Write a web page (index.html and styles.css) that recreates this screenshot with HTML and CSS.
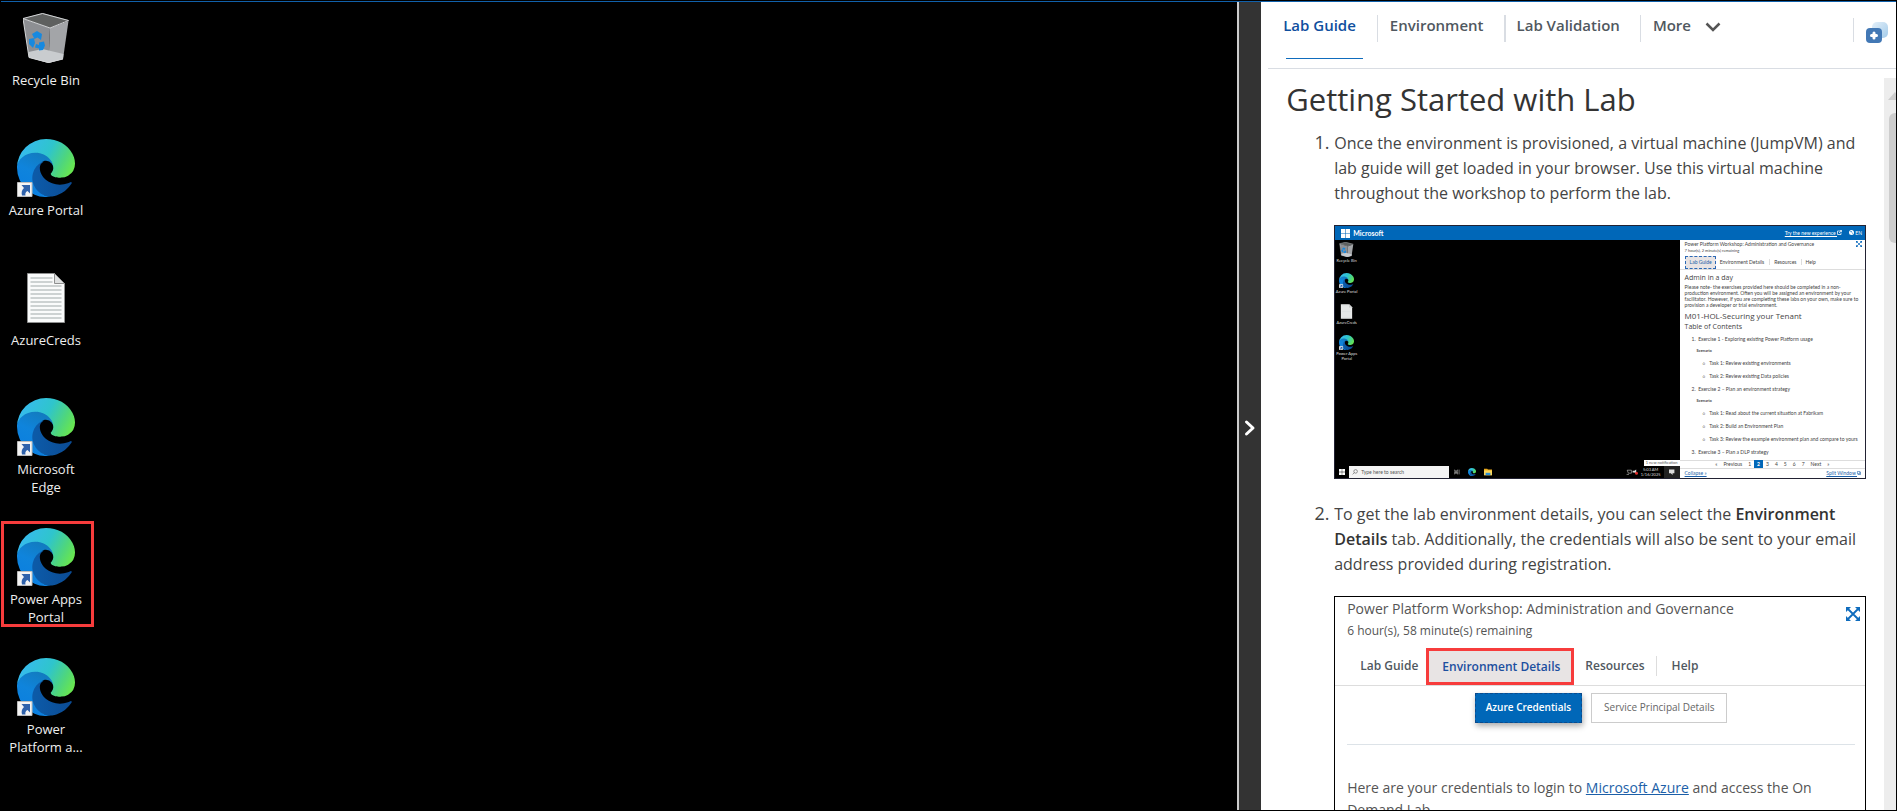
FILE: index.html
```html
<!DOCTYPE html>
<html lang="en">
<head>
<meta charset="utf-8">
<title>Lab Guide</title>
<link rel="stylesheet" href="styles.css">
</head>
<body>
<svg class="defs" aria-hidden="true">
  <defs>
    <linearGradient id="g-dark" x1="0.1" y1="0.6" x2="0.95" y2="0.6"><stop offset="0" stop-color="#0c5aa8"/><stop offset="1" stop-color="#0b4c95"/></linearGradient>
    <linearGradient id="g-blue" x1="0.7" y1="0" x2="0.3" y2="1"><stop offset="0" stop-color="#1379b8"/><stop offset="0.5" stop-color="#0f84dc"/><stop offset="1" stop-color="#0a7ee0"/></linearGradient>
    <linearGradient id="g-green" x1="0" y1="0.3" x2="1" y2="0.65"><stop offset="0" stop-color="#37b9f2"/><stop offset="0.5" stop-color="#2fc5cc"/><stop offset="0.8" stop-color="#4fd67c"/><stop offset="1" stop-color="#68e650"/></linearGradient>
    <symbol id="edge" viewBox="0 0 256 256">
      <path fill="url(#g-dark)" d="M235.68 190.46a93.73 93.73 0 0 1-10.54 4.71 101.87 101.87 0 0 1-35.9 6.46c-47.32 0-88.54-32.55-88.54-74.32A31.48 31.48 0 0 1 117.13 100c-42.8 1.8-53.8 46.4-53.8 72.53 0 73.88 68.09 81.37 82.76 81.37 7.91 0 19.84-2.3 27-4.56l1.31-.44a128.34 128.34 0 0 0 66.6-52.8 4 4 0 0 0-5.32-5.64z"/>
      <path fill="url(#g-blue)" d="M105.73 241.42a79.2 79.2 0 0 1-22.74-21.34 80.72 80.72 0 0 1 29.53-120c3.12-1.47 8.45-4.13 15.54-4a32.35 32.35 0 0 1 25.69 13 31.88 31.88 0 0 1 6.36 18.66c0-.21 24.46-79.6-80-79.6-43.9 0-80 41.66-80 78.21a130.15 130.15 0 0 0 12.11 56 128 128 0 0 0 156.38 67.11 75.55 75.55 0 0 1-62.78-8z"/>
      <path fill="url(#g-green)" d="M152.33 148.86c-.81 1.05-3.3 2.5-3.3 5.66 0 2.61 1.7 5.12 4.72 7.23 14.38 10 41.49 8.68 41.56 8.68a59.56 59.56 0 0 0 30.27-8.35A61.38 61.38 0 0 0 256 109.2c.26-22.41-8-37.31-11.34-43.91C223.46 23.84 177.72 0 128 0A128 128 0 0 0 0 126.2c.48-36.54 36.8-66.05 80-66.05 3.5 0 23.46.34 42 10.07 16.34 8.58 24.9 18.94 30.85 29.21 6.18 10.67 7.28 24.15 7.28 29.52s-2.74 13.33-7.8 19.91z"/>
    </symbol>
    <symbol id="edge-link" viewBox="0 0 58 58">
      <use href="#edge" width="58" height="58"/>
      <path fill="#f4f4f4" stroke="#bdbdbd" d="M.5 43.500h14.500v14H.5z"/>
      <path fill="#2f62ab" d="M4.500 46h8.500v8.500l-2.500-2.500c-2 1-2.500 2.500-2 4.500h-3.500c-1-3.500 0-5.500 2-7.500z"/>
    </symbol>
    <symbol id="bin" viewBox="0 0 46 50">
      <path fill="#8d8f93" d="M0 5.500 27 15l-1.500 35L6 44.500z"/>
      <path fill="#a3a5a8" d="M27 15 45.500 8 40 46l-14.500 4z"/>
      <path fill="#5e605f" d="M0 5.500 19.500 0l26 7L27 15z"/>
      <path fill="#c9cccf" d="m5.500 39 14-3 21 5-.5 5-14.500 4L6 44.500z"/>
      <path fill="none" stroke="#d4d6d8" d="M0 5.500 19.500 0.500l26 7L27 15zL6 44.500 25.500 49.500 40 46"/>
      <path fill="#1689e0" d="m9 21 5-3 5 3-1 6-3.500-2.500-3 1.500zM6 26l5-1 1 5-2 5-4-4zm7 5 3 1v-2.500l5-1 1 4-2 4.500-4 .5v-2l-4-1z"/>
    </symbol>
    <symbol id="doc" viewBox="0 0 38 50">
      <path fill="#fafbfb" stroke="#8f9090" d="M.5.5h27l10 10v39H.5z"/>
      <path fill="#dfe1e1" stroke="#8f9090" d="M27.500.5v10h10z"/>
      <path stroke="#bfc5c5" stroke-width="1.500" d="M3.500 5h22M3.500 9h22M3.500 13h31M3.500 17h31M3.500 21h31M3.500 25h31M3.500 29h31M3.500 33h31M3.500 37h31M3.500 41h31M3.500 45h31"/>
    </symbol>
    <symbol id="expand" viewBox="0 0 14 14">
      <path fill="none" stroke="#0f6cbd" stroke-width="1.800" d="m2 2 10 10M12 2 2 12"/>
      <path fill="#0f6cbd" d="M0 0h5L0 5zM14 0v5L9 0zM0 14V9l5 5zM14 14H9l5-5z"/>
    </symbol>
    <symbol id="win" viewBox="0 0 10 10"><path fill="#fff" d="M0 0h4.700v4.700H0zM5.300 0H10v4.700H5.300zM0 5.300h4.700V10H0zM5.300 5.300H10V10H5.300z"/></symbol>
  </defs>
</svg>
<div class="app">
  <main class="desktop">
    <a href="#" class="shortcut"><svg class="icon-bin"><use href="#bin"/></svg><span>Recycle Bin</span></a>
    <a href="#" class="shortcut"><svg class="icon"><use href="#edge-link"/></svg><span>Azure Portal</span></a>
    <a href="#" class="shortcut"><svg class="icon-bin"><use href="#doc"/></svg><span>AzureCreds</span></a>
    <a href="#" class="shortcut"><svg class="icon"><use href="#edge-link"/></svg><span>Microsoft<br>Edge</span></a>
    <a href="#" class="shortcut marked"><svg class="icon"><use href="#edge-link"/></svg><span>Power Apps<br>Portal</span></a>
    <a href="#" class="shortcut"><svg class="icon"><use href="#edge-link"/></svg><span>Power<br>Platform a...</span></a>
  </main>
  <button class="splitter" aria-label="Collapse guide"><svg width="12" height="18" viewBox="0 0 12 18"><path fill="none" stroke="#fff" stroke-width="3" stroke-linecap="round" stroke-linejoin="round" d="m2.500 3 6.500 6-6.500 6"/></svg></button>
  <aside class="guide">
    <header class="topbar">
      <nav class="tabs">
        <a href="#" class="tab active">Lab Guide</a>
        <a href="#" class="tab">Environment</a>
        <a href="#" class="tab thick">Lab Validation</a>
        <button class="tab more">More <svg width="16" height="10" viewBox="0 0 16 10"><path fill="none" stroke="#555" stroke-width="2.500" d="m1.500 1.500 6.500 6.500 6.500-6.500"/></svg></button>
      </nav>
      <button class="assist" aria-label="Open copilot"><svg width="22" height="22" viewBox="0 0 22 22"><defs><linearGradient id="g-a" x1="0" y1="0" x2="1" y2="1"><stop offset="0" stop-color="#e4f0fa"/><stop offset="1" stop-color="#a3cbea"/></linearGradient></defs><rect x="6" y="0" width="16" height="16" rx="5" fill="url(#g-a)"/><rect x="0" y="6" width="16" height="15" rx="4" fill="#4278b5"/><path stroke="#fff" stroke-width="3" stroke-linecap="round" d="M8 11v5M5.500 13.500h5"/></svg></button>
    </header>
    <div class="scroller">
      <article class="content">
        <h1>Getting Started with Lab</h1>
        <ol class="steps">
          <li>
            <p>Once the environment is provisioned, a virtual machine (JumpVM) and lab guide will get loaded in your browser. Use this virtual machine throughout the workshop to perform the lab.</p>
            <figure class="mini">
              <div class="mini-head"><svg class="mini-win"><use href="#win"/></svg><b>Microsoft</b><a href="#" class="mini-try">Try the new experience <svg width="5" height="5" viewBox="0 0 10 10"><path fill="none" stroke="#fff" stroke-width="1.500" d="M6 2H1v7h7V5M4 6l5-5M6 1h3v3"/></svg></a><span class="mini-lang"><svg width="5" height="5" viewBox="0 0 10 10"><circle cx="5" cy="5" r="5" fill="#fff"/><path fill="#0067b8" d="M3 2l3 1-1 2-2-1zM6 5l2 1-1 2z"/></svg> EN</span></div>
              <div class="mini-body">
                <div class="mini-desk">
                  <div class="mini-icons">
                    <div><svg><use href="#bin"/></svg><span>Recycle Bin</span></div>
                    <div><svg><use href="#edge-link"/></svg><span>Azure Portal</span></div>
                    <div><svg><use href="#doc"/></svg><span>AzureCreds</span></div>
                    <div><svg><use href="#edge-link"/></svg><span>Power Apps<br>Portal</span></div>
                  </div>
                  <div class="mini-tip">1 new notification</div>
                  <div class="mini-task">
                    <svg class="t-win"><use href="#win"/></svg>
                    <div class="t-search"><svg width="6" height="6" viewBox="0 0 10 10"><circle cx="6" cy="4" r="3" fill="none" stroke="#555"/><path stroke="#555" d="M4 6 1 9"/></svg>Type here to search</div>
                    <svg class="t-i" viewBox="0 0 10 10"><path fill="none" stroke="#bbb" d="M1 1v2h5V1M1 9V7h5v2M1 4.500h5V6H1zM8.500 1v8"/></svg>
                    <svg class="t-edge"><use href="#edge"/></svg>
                    <svg class="t-edge" viewBox="0 0 10 10"><path fill="#e8a81c" d="M0 1h4l1 1h5v7H0z"/><path fill="#fbd65b" d="M0 3h10v6H0z"/><path fill="#2c8fd6" d="M2 6h6v3H2z"/></svg>
                    <span class="t-space"></span>
                    <svg class="t-i" viewBox="0 0 10 10"><path fill="none" stroke="#ccc" d="M2 2h7v5H4zM1 9h4"/></svg>
                    <svg class="t-i" viewBox="0 0 10 10"><path fill="#ddd" d="M1 3h3l3-2v7L4 6H1z"/><circle cx="7.500" cy="7" r="2.500" fill="#e02b2b"/></svg>
                    <span class="t-clock">5:03 AM<br>1/16/2025</span>
                    <span class="t-note"><svg class="t-i" viewBox="0 0 10 10"><path fill="#ddd" d="M0 1h9v6H6v3L3 7H0z"/></svg></span>
                  </div>
                </div>
                <div class="mini-guide">
                  <div class="mg-title">Power Platform Workshop: Administration and Governance<svg width="6" height="6"><use href="#expand"/></svg></div>
                  <div class="mg-time">7 hour(s), 2 minute(s) remaining</div>
                  <div class="mg-tabs"><b>Lab Guide</b><span>Environment Details</span><span>Resources</span><span>Help</span></div>
                  <div class="mg-text">
                    <h2>Admin in a day</h2>
                    <p>Please note- the exercises provided here should be completed in a non-<br>production environment. Often you will be assigned an environment by your<br>facilitator. However, if you are completing these labs on your own, make sure to<br>provision a developer or trial environment.</p>
                    <h2 class="big">M01-HOL-Securing your Tenant</h2>
                    <h2>Table of Contents</h2>
                  </div>
                  <div class="mg-list">
                    <span>1. &nbsp;Exercise 1 - Exploring existing Power Platform usage</span>
                    <b>Scenario</b>
                    <em>Task 1: Review existing environments</em>
                    <em>Task 2: Review existing Data policies</em>
                    <span>2. &nbsp;Exercise 2 – Plan an environment strategy</span>
                    <b>Scenario</b>
                    <em>Task 1: Read about the current situation at Fabrikam</em>
                    <em>Task 2: Build an Environment Plan</em>
                    <em>Task 3: Review the example environment plan and compare to yours</em>
                    <span>3. &nbsp;Exercise 3 – Plan a DLP strategy</span>
                  </div>
                  <div class="mg-pages"><span>«</span><span>Previous</span><span>1</span><b>2</b><span>3</span><span>4</span><span>5</span><span>6</span><span>7</span><span>Next</span><span>»</span></div>
                  <div class="mg-foot"><a href="#">Collapse »</a><a href="#">Split Window <svg width="4" height="4" viewBox="0 0 10 10"><path fill="none" stroke="#1c5fa8" stroke-width="1.500" d="M1 1h6v6H1zM3 7v2h6V3H7"/></svg></a></div>
                </div>
              </div>
            </figure>
          </li>
          <li>
            <p>To get the lab environment details, you can select the <strong>Environment Details</strong> tab. Additionally, the credentials will also be sent to your email address provided during registration.</p>
            <figure class="creds">
              <div class="c-title"><span>Power Platform Workshop: Administration and Governance</span><svg width="14" height="14"><use href="#expand"/></svg></div>
              <div class="c-time">6 hour(s), 58 minute(s) remaining</div>
              <div class="c-tabs"><a href="#" class="c-guide">Lab Guide</a><a href="#" class="c-env">Environment Details</a><a href="#" class="c-res">Resources</a><a href="#" class="c-help">Help</a></div>
              <div class="c-buttons"><button class="primary">Azure Credentials</button><button>Service Principal Details</button></div>
              <p class="c-text">Here are your credentials to login to <a href="#">Microsoft Azure</a> and access the On Demand Lab</p>
            </figure>
          </li>
        </ol>
      </article>
      <div class="scrollbar"><svg width="14" height="8" viewBox="0 0 14 8"><path fill="#cdcdcd" d="M7 0l7 8H0z"/></svg><i></i></div>
    </div>
  </aside>
</div>
</body>
</html>
```
FILE: styles.css
```css
* { box-sizing: border-box; }
body { margin: 0; height: 100vh; padding: 1px; background: #000; font-family: "Open Sans", "Noto Sans", sans-serif; color: #444; overflow: hidden; }
button { font: inherit; border: 0; background: none; padding: 0; }
.defs { position: absolute; width: 0; height: 0; }
.app { height: 100%; display: grid; grid-template-columns: minmax(0, 1fr) 24px 33.5%; border-top: 1px solid #1060aa; }

.desktop { display: grid; grid-auto-rows: 16vh; padding-top: 7px; justify-content: start; grid-template-columns: 90px; overflow: hidden; }
.shortcut { display: flex; flex-direction: column; align-items: center; color: #eee; font-size: 13px; line-height: 18px; text-align: center; text-decoration: none; white-space: nowrap; }
.icon { width: 58px; height: 58px; margin-bottom: 4px; }
.icon-bin { width: 46px; height: 50px; margin: 4px 0 8px; }
.shortcut.marked { position: relative; }
.shortcut.marked::after { content: ""; position: absolute; inset: -7px -3px 31px 0; border: 3px solid #f73c3c; }

.splitter { background: #333; border-left: 2px solid #ccc; display: flex; align-items: center; justify-content: center; padding-top: 43px; }

.guide { background: #fff; display: flex; flex-direction: column; min-height: 0; overflow: hidden; }
.topbar { height: 67px; flex: none; margin-left: 7px; border-bottom: 1px solid #d9dde3; display: flex; justify-content: space-between; align-items: flex-start; padding: 13px 8px 0 15px; }
.tabs { display: flex; }
.tab { position: relative; font-size: 15px; line-height: 20px; height: 27px; font-weight: 600; color: #505860; text-decoration: none; padding: 0 20px 0 12px; border-left: 1px solid #d9dde3; white-space: nowrap; }
.tab.active { color: #0f4f9e; border-left: 0; padding: 0 21px 0 0; }
.tab.active::after { content: ""; position: absolute; left: 3px; right: 14px; top: 43px; border-bottom: 1px solid #0f6cbd; }
.tab.thick { border-left-width: 2px; padding-left: 11px; }
.tab.more { padding-right: 0; display: flex; align-items: flex-start; gap: 14px; }
.tab.more svg { margin-top: 7px; }
.assist { border-left: 1px solid #d9dde3; padding-left: 12px; height: 24px; margin-top: 3px; }
.assist svg { margin-top: 4px; display: block; }

.scroller { flex: 1; min-height: 0; display: flex; overflow: hidden; }
.content { flex: 1; min-width: 0; padding: 8px 18px 0 25px; }
.scrollbar { width: 12px; flex: none; margin-top: 9px; background: #ededed; overflow: hidden; padding: 14px 0 0 4px; }
.scrollbar svg { display: block; }
.scrollbar i { display: block; margin: 13px 0 0 1px; width: 14px; height: 130px; background: #cdcdcd; border-radius: 6px; }
h1 { margin: 0; font-size: 31px; line-height: 44px; font-weight: 400; color: #333; white-space: nowrap; }
.steps { margin: 9px 0 0; padding-left: 48px; font-size: 16px; line-height: 25px; }
.steps li { margin-bottom: 22px; }
.steps li::marker { font-size: 18px; }
.steps p { margin: 0; }
figure { margin: 19px 0 0; }
strong { font-weight: 600; color: #333; }

.mini { aspect-ratio: 532 / 254; display: flex; flex-direction: column; overflow: hidden; border: 1px solid #223; font-family: Lato, "Open Sans", sans-serif; font-size: 5px; line-height: 6px; white-space: nowrap; }
.mini svg { display: inline-block; }
.mini-head { height: 14px; flex: none; background: #0067b8; color: #fff; display: flex; align-items: center; padding: 0 3px 0 6px; gap: 3px; }
.mini-head b { font-size: 7px; }
.mini-win { width: 9px; height: 9px; }
.mini-try { margin-left: auto; color: #fff; }
.mini-lang { margin-left: 4px; }
.mini-body { flex: 1; min-height: 0; display: grid; grid-template-columns: minmax(0, 1fr) 35%; }
.mini-desk { background: #000; display: flex; flex-direction: column; min-height: 0; color: #ddd; }
.mini-icons { flex: 1; display: grid; grid-auto-rows: 31px; width: 23px; padding-top: 2px; line-height: 5px; font-size: 4px; }
.mini-icons div { display: flex; flex-direction: column; align-items: center; gap: 1px; text-align: center; }
.mini-icons svg { width: 15px; height: 15px; flex: none; }
.mini-tip { align-self: flex-end; background: #fff; color: #555; font-size: 4px; padding: 0 2px; }
.mini-task { height: 12px; display: flex; align-items: center; }
.t-win { width: 6px; height: 6px; margin: 0 4px 0 4px; }
.t-search { background: #f4f4f4; color: #555; width: 100px; height: 12px; display: flex; align-items: center; gap: 3px; padding-left: 3px; margin-right: 5px; }
.t-i { width: 6px; height: 6px; }
.t-edge { width: 8px; height: 8px; margin-left: 8px; }
.t-space { flex: 1; }
.t-clock { font-size: 4px; line-height: 5px; text-align: center; margin: 0 3px; }
.t-note { background: #222; padding: 3px 5px; line-height: 0; }
.mini-guide { background: #fff; color: #444; display: flex; flex-direction: column; min-height: 0; }
.mg-title { display: flex; justify-content: space-between; padding: 1px 3px 0 5px; height: 8px; flex: none; }
.mg-time { font-size: 4px; padding-left: 5px; line-height: 6px; }
.mg-tabs { display: flex; align-items: center; padding: 1px 5px 0; height: 16px; flex: none; border-bottom: 1px solid #ddd; }
.mg-tabs b { border: 1px dashed #2b69b5; background: #e8e4e4; color: #1c5fa8; padding: 2px 3px 3px 4px; font-weight: 400; }
.mg-tabs span { padding: 0 5px 0 4px; }
.mg-tabs span + span { border-left: 1px solid #ddd; padding: 0 4px; }
.mg-text { padding: 3px 5px 0; }
.mg-text h2 { margin: 0; font-family: "Open Sans", sans-serif; font-size: 7px; line-height: 10px; font-weight: 400; }
.mg-text h2.big { font-size: 8px; line-height: 12px; }
.mg-text p { line-height: 6px; margin: 1px 0 2px; }
.mg-list { flex: 1; display: flex; flex-direction: column; justify-content: space-between; padding: 4px 0 5px 12px; font-size: 5px; }
.mg-list b { padding-left: 5px; font-size: 4px; }
.mg-list em { font-style: normal; padding-left: 11px; }
.mg-list em::before { content: "○"; font-size: 4px; margin-right: 4px; }
.mg-pages { display: flex; justify-content: center; align-items: center; height: 9px; flex: none; gap: 6px; border-top: 1px solid #ddd; border-bottom: 1px solid #ddd; }
.mg-pages b { background: #0067b8; color: #fff; line-height: 8px; padding: 0 3px; margin: 0 -3px; }
.mg-foot { display: flex; justify-content: space-between; padding: 1px 4px 2px 5px; height: 9px; flex: none; }
.mg-foot a { color: #1c5fa8; }

.creds { border: 1px solid #000; height: 330px; color: #555; }
.c-title { display: flex; justify-content: space-between; padding: 1px 5px 0 12px; font-size: 14px; line-height: 22px; white-space: nowrap; }
.c-title svg { margin-top: 9px; }
.c-time { padding-left: 12px; font-size: 12px; line-height: 20px; }
.c-tabs { display: flex; align-items: center; margin-top: 7px; border-bottom: 1px solid #ddd; font-size: 12px; font-weight: 600; white-space: nowrap; }
.c-tabs a { color: #505860; text-decoration: none; line-height: 20px; }
.c-tabs .c-guide { padding: 0 8px 0 25px; }
.c-tabs .c-env { border: 3px solid #f73c3c; background: #e8e4e4; color: #1c4f9f; line-height: 31px; padding: 0 11px 0 13px; }
.c-tabs .c-res { padding: 0 11px; border-right: 1px solid #ddd; }
.c-tabs .c-help { padding-left: 15px; }
.c-buttons { display: flex; gap: 9px; justify-content: center; margin: 0 10px 0 12px; padding: 7px 0 21px; border-bottom: 1px solid #dde3e8; }
.c-buttons button { height: 30px; padding: 0 12px; border: 1px solid #ccc; background: #fff; color: #666; font-size: 10px; white-space: nowrap; }
.c-buttons .primary { background: #0067b8; border: 1px dashed #0a4a8c; color: #fff; font-weight: 600; padding: 0 10px; box-shadow: 1px 3px 6px #0005; }
.steps .c-text { padding: 32px 36px 0 12px; font-size: 14px; line-height: 22px; }
.c-text a { color: #1c5fa8; }
```
